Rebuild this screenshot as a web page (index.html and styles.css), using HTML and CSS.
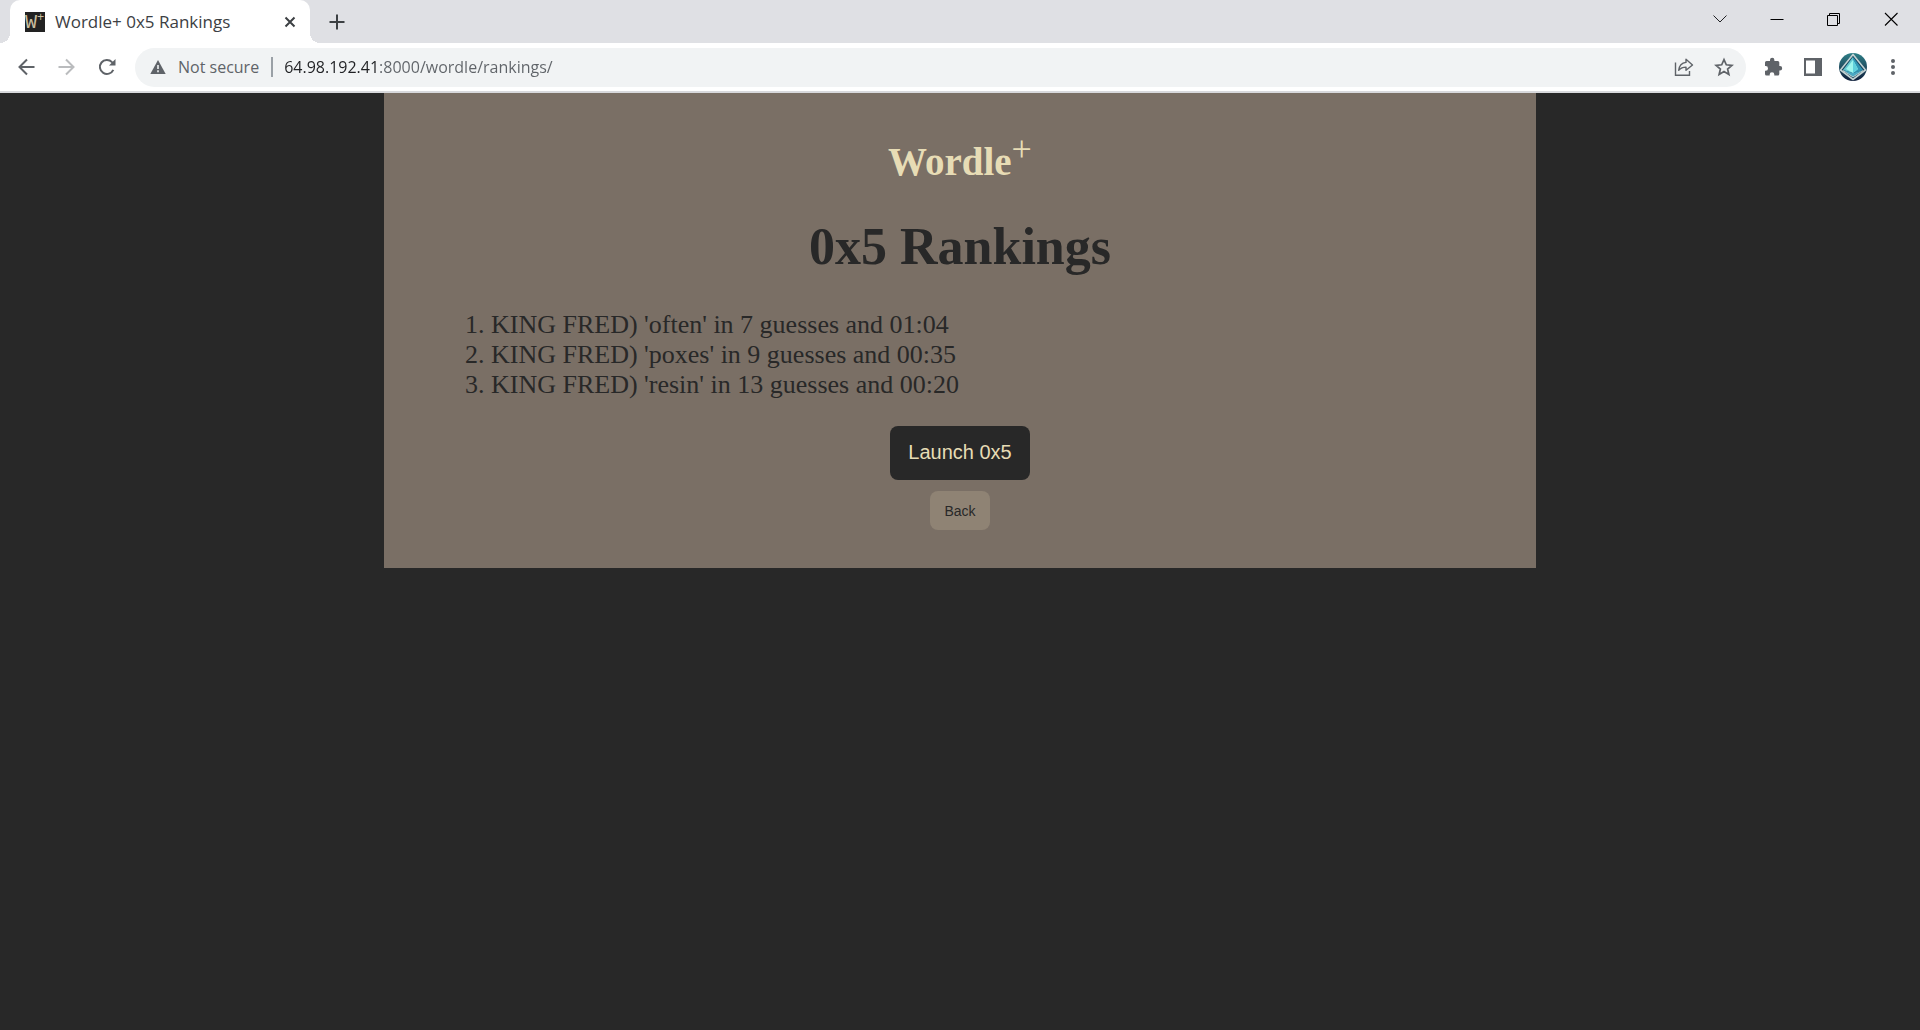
FILE: index.html
```html
<!DOCTYPE html>
<html lang="en">
<head>
<meta charset="utf-8">
<title>Wordle+ 0x5 Rankings</title>
<link rel="stylesheet" href="styles.css">
</head>
<body>
<header class="browser">
  <div class="tabstrip">
    <div class="tab">
      <span class="favicon">W<span class="favicon-plus">+</span></span>
      <span class="tab-title">Wordle+ 0x5 Rankings</span>
      <button class="icon-btn tab-close" type="button" aria-label="Close tab"><svg width="20" height="20" viewBox="0 0 20 20"><path d="M5.500 5.500 14.500 14.500M14.500 5.500 5.500 14.500" stroke="#3c4043" stroke-width="2" fill="none"/></svg></button>
    </div>
    <button class="icon-btn new-tab" type="button" aria-label="New tab"><svg width="20" height="20" viewBox="0 0 20 20"><path d="M10 2.500v15M2.500 10h15" stroke="#3c4043" stroke-width="2" fill="none"/></svg></button>
    <div class="window-controls">
      <button class="icon-btn" type="button" aria-label="Search tabs"><svg width="20" height="20" viewBox="0 0 20 20"><path d="M3.500 6.500 10 13l6.500-6.500" stroke="#202124" fill="none"/></svg></button>
      <button class="icon-btn" type="button" aria-label="Minimize"><svg width="20" height="20" viewBox="0 0 20 20"><path d="M3.500 10.500h13" stroke="#000" fill="none"/></svg></button>
      <button class="icon-btn" type="button" aria-label="Restore"><svg width="20" height="20" viewBox="0 0 20 20"><path d="M3.500 6.500h10v10h-10zM5.500 6.500v-2h10v10h-2" stroke="#000" fill="none"/></svg></button>
      <button class="icon-btn" type="button" aria-label="Close"><svg width="20" height="20" viewBox="0 0 20 20"><path d="M4 4l12.500 12.500M16.500 4 4 16.500" stroke="#000" stroke-width="1.100" fill="none"/></svg></button>
    </div>
  </div>
  <div class="toolbar">
    <div class="nav">
      <button class="icon-btn" type="button" aria-label="Back"><svg width="20" height="20" viewBox="0 0 20 20"><path d="M17.500 10H3M10 2.500 2.500 10l7.500 7.500" stroke="#5f6368" stroke-width="2" fill="none"/></svg></button>
      <button class="icon-btn" type="button" aria-label="Forward"><svg width="20" height="20" viewBox="0 0 20 20"><path d="M1.500 10h15M9 2.500l7.500 7.500L9 17.500" stroke="#babcbe" stroke-width="2" fill="none"/></svg></button>
      <button class="icon-btn" type="button" aria-label="Reload"><svg width="20" height="20" viewBox="0 0 20 20"><path d="M16.300 12.800A7 7 0 1 1 15 5.100L17 7" stroke="#5f6368" stroke-width="2" fill="none"/><path d="M18.500 2v6.500h-6.500z" fill="#5f6368"/></svg></button>
    </div>
    <div class="omnibox">
      <svg width="16" height="16" viewBox="0 0 16 16"><path d="M8 1 15.700 15H.300z" fill="#5f6368"/><path d="M8 6v4M8 11.300v2" stroke="#f1f3f4" stroke-width="1.600"/></svg>
      <label class="security" for="address">Not secure</label>
      <input class="address" id="address" type="text" value="64.98.192.41:8000/wordle/rankings/">
      <button class="icon-btn" type="button" aria-label="Share"><svg width="20" height="20" viewBox="0 0 20 20"><path d="M1.500 5.500v12.800h14V14" stroke="#5f6368" stroke-width="1.400" fill="none"/><path d="M12 2.300 18.500 8 12 13.300v-3.200c-3.300 0-5.400 1-7.300 3.200.500-4.500 3-7.400 7.300-7.900z" stroke="#5f6368" stroke-width="1.400" stroke-linejoin="round" fill="none"/></svg></button>
      <button class="icon-btn" type="button" aria-label="Bookmark"><svg width="20" height="20" viewBox="0 0 20 20"><path d="M10 2.600l2.300 5.200 5.600.500-4.300 3.700 1.300 5.500-4.900-2.900-4.900 2.900 1.300-5.500L2.100 8.300l5.600-.500z" stroke="#5f6368" stroke-width="1.700" fill="none"/></svg></button>
    </div>
    <div class="actions">
      <button class="icon-btn" type="button" aria-label="Extensions"><svg width="20" height="20" viewBox="0 0 20 20"><path d="M2 5.500Q2 4 3.500 4H7V3a2.200 2.200 0 0 1 4.400 0v1h3.400q1.500 0 1.500 1.500V9h.700a2.200 2.200 0 0 1 0 4.400h-.700v3.600q0 1.500-1.500 1.500h-3.500v-1a2.300 2.300 0 0 0-4.600 0v1H3.500Q2 18.500 2 17v-3.300h.700a2.300 2.300 0 0 0 0-4.600H2z" fill="#5f6368"/></svg></button>
      <button class="icon-btn" type="button" aria-label="Side panel"><svg width="20" height="20" viewBox="0 0 20 20"><path fill-rule="evenodd" d="M1 1h18v18H1zM3 3.500v13h9v-13z" fill="#5f6368"/></svg></button>
      <button class="icon-btn profile" type="button" aria-label="Profile">
        <svg width="28" height="28" viewBox="0 0 28 28">
          <defs><linearGradient id="sky" x1="0" y1="0" x2="0" y2="1"><stop offset="0" stop-color="#2d7f86"/><stop offset=".6" stop-color="#20475c"/><stop offset="1" stop-color="#0d1d3a"/></linearGradient></defs>
          <circle cx="14" cy="14" r="14" fill="url(#sky)"/>
          <path d="M14 1.500 26.500 17 14 26.500 1.500 17z" fill="#17445c" stroke="#c3d2d3" stroke-width="1.600"/>
          <path d="M14 4v16l-10-3z" fill="#62c6d0"/><path d="M14 4v16l10-3z" fill="#2f95b4"/>
          <path d="M14 7l5 9-5 4-7-4z" fill="#9df5ed"/><path d="M14 7l5 9-5 4z" fill="#5fd0dc"/>
          <path d="M4 17l10 3 10-3-10 7z" fill="#4aa9c4"/>
          <path d="M4 17.500l10 6.500 10-6.500" stroke="#d7e7e5" stroke-width=".8" fill="none"/>
        </svg>
      </button>
      <button class="icon-btn" type="button" aria-label="Menu"><svg width="20" height="20" viewBox="0 0 20 20" fill="#5f6368"><circle cx="10" cy="4" r="2"/><circle cx="10" cy="10" r="2"/><circle cx="10" cy="16" r="2"/></svg></button>
    </div>
  </div>
</header>
<main class="board">
  <h1 class="brand">Wordle<span class="brand-plus">+</span></h1>
  <h2 class="heading">0x5 Rankings</h2>
  <ol class="rankings">
    <li>KING FRED) 'often' in 7 guesses and 01:04</li>
    <li>KING FRED) 'poxes' in 9 guesses and 00:35</li>
    <li>KING FRED) 'resin' in 13 guesses and 00:20</li>
  </ol>
  <button class="launch" type="button">Launch 0x5</button>
  <button class="back" type="button">Back</button>
</main>
</body>
</html>
```
FILE: styles.css
```css
* { box-sizing: border-box; }

body {
  margin: 0;
  min-height: 100vh;
  background: #282828;
  color: #282828;
  font-family: "Liberation Serif", "Times New Roman", serif;
}

button { border: 0; cursor: pointer; }
svg { display: block; }

.browser {
  font-family: "Open Sans", "Segoe UI", sans-serif;
  background: #fff;
  border-bottom: 2px solid #d8d9dc;
}

.icon-btn {
  display: flex;
  align-items: center;
  justify-content: center;
  padding: 0;
  background: none;
}

.tabstrip {
  display: flex;
  align-items: center;
  height: 43px;
  padding-left: 10px;
  background: #dfe0e4;
}

.tab {
  position: relative;
  display: flex;
  align-items: center;
  width: 300px;
  height: 43px;
  padding: 0 10px 0 15px;
  border-radius: 10px 10px 0 0;
  background: #fff;
}

/* flared feet of the active tab */
.tab::before,
.tab::after {
  content: "";
  position: absolute;
  bottom: 0;
  width: 10px;
  height: 10px;
}
.tab::before { left: -10px; background: radial-gradient(circle at 0 0, #dfe0e4 10px, #fff 10px); }
.tab::after { right: -10px; background: radial-gradient(circle at 100% 0, #dfe0e4 10px, #fff 10px); }

.favicon {
  display: flex;
  width: 20px;
  height: 20px;
  background: #222;
  color: #c9bd9e;
  font: 20px/22px "Liberation Mono", monospace;
}
.favicon-plus { font-size: 12px; line-height: 12px; }

.tab-title {
  flex: 1;
  margin-left: 10px;
  color: #3c4043;
  font-size: 17px;
  line-height: 24px;
}

.new-tab { margin-left: 17px; }

.window-controls {
  display: flex;
  gap: 37px;
  margin-left: auto;
  padding: 0 19px 6px 0;
}

.toolbar {
  display: flex;
  align-items: center;
  height: 48px;
  padding-right: 17px;
}

.nav {
  display: flex;
  gap: 20px;
  padding: 0 18px 0 17px;
}

.omnibox {
  display: flex;
  flex: 1;
  align-items: center;
  gap: 20px;
  height: 39px;
  padding: 0 12px 0 15px;
  border-radius: 20px;
  background: #f1f3f4;
}

.security {
  margin-left: -8px;
  padding-right: 12px;
  border-right: 2px solid #9aa0a6;
  color: #5f6368;
  font-size: 16px;
  line-height: 20px;
}

.address {
  flex: 1;
  min-width: 0;
  margin-left: -9px;
  padding: 0;
  border: 0;
  outline: 0;
  /* host in dark ink, port and path in grey */
  background: linear-gradient(to right, #202124 96px, #5f6368 96px);
  -webkit-background-clip: text;
  background-clip: text;
  color: transparent;
  font: inherit;
  font-size: 16px;
}

.actions {
  display: flex;
  align-items: center;
  gap: 20px;
  padding-left: 17px;
}
.profile { margin: 0 -4px; }

.board {
  display: flex;
  flex-direction: column;
  align-items: center;
  width: 60%;
  margin: 0 auto;
  padding: 46px 0 38px;
  background: #7a6f65;
}

.brand,
.heading { margin: 0; font-weight: bold; }

.brand {
  color: #e7dcb5;
  font-size: 39px;
  line-height: 46px;
}
.brand-plus {
  font-size: 36px;
  font-weight: normal;
  line-height: 0;
  vertical-align: 14px;
}

.heading {
  margin-top: 32px;
  font-size: 52px;
  line-height: 60px;
}

.rankings {
  align-self: stretch;
  margin: 33px 0 26px;
  padding-left: 107px;
  font-size: 26px;
  line-height: 30px;
}

.launch,
.back {
  border-radius: 8px;
  font-family: "Liberation Sans", Arial, sans-serif;
}
.launch {
  width: 140px;
  height: 54px;
  padding-bottom: 3px;
  background: #282828;
  color: #e7dcb5;
  font-size: 20px;
}
.back {
  width: 60px;
  height: 39px;
  margin-top: 11px;
  background: #8f8374;
  color: #282828;
  font-size: 14px;
}
```
